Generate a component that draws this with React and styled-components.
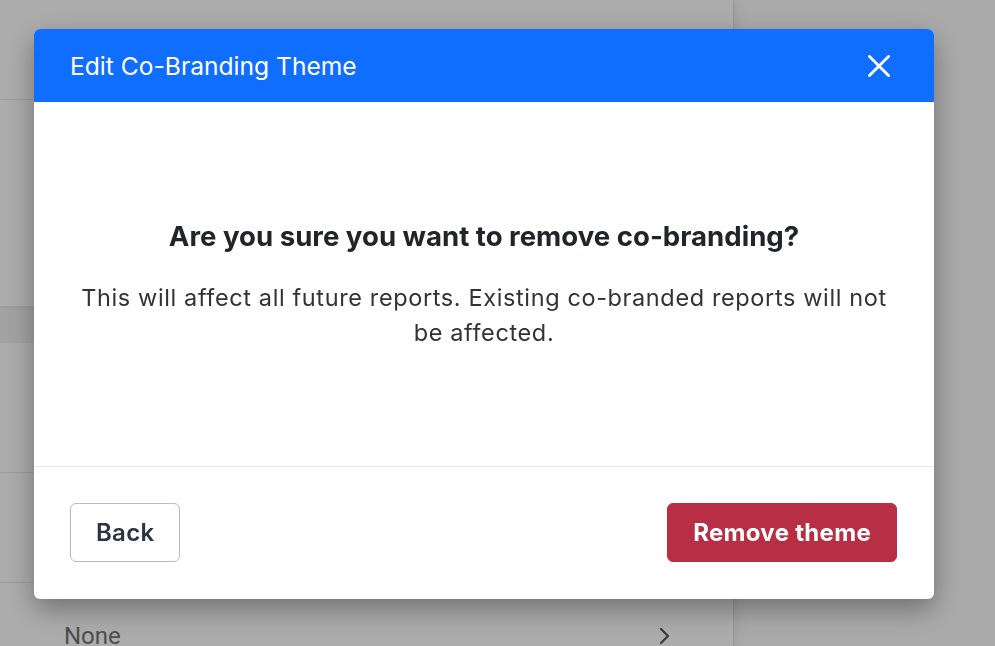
import styled, { createGlobalStyle } from "styled-components";

const GlobalStyle = createGlobalStyle`
  html, body {
    margin: 0;
    padding: 0;
    height: 100%;
    overflow: hidden;
  }
  body {
    font-family: Inter, "Noto Sans", sans-serif;
    background: #ffffff;
  }
`;

const Page = styled.div`
  display: flex;
  width: 100vw;
  height: 100vh;
  overflow: hidden;
  background: #fcfcfc;
`;

const Panel = styled.div`
  width: 733px;
  display: flex;
  flex-direction: column;
  background: #f1f1f1;
  border-right: 1px solid #e6e6e6;
  box-shadow: 4px 0 10px rgba(0, 0, 0, 0.06);
`;

const Card = styled.div`
  background: #ffffff;
  box-shadow: 0 2px 4px rgba(0, 0, 0, 0.05);
  margin-bottom: ${(p) => p.$gap || 0}px;
`;

const Row = styled.div`
  height: ${(p) => p.$h}px;
  border-bottom: 1px solid ${(p) => (p.$last ? "transparent" : "#e9e9e9")};
  display: flex;
  align-items: flex-start;
  justify-content: space-between;
  padding: 38px 61px 0 64px;
  box-sizing: border-box;
  overflow: hidden;
`;

const RowLabel = styled.span`
  font-family: Roboto, Inter, sans-serif;
  font-size: 24px;
  line-height: 30px;
  color: #6f7378;
`;

const Chevron = styled.svg`
  width: 14px;
  height: 20px;
  margin-top: 5px;
`;

const Overlay = styled.div`
  position: fixed;
  inset: 0;
  background: rgba(0, 0, 0, 0.325);
  display: flex;
  align-items: flex-start;
  justify-content: flex-start;
  padding: 29px 0 0 34px;
`;

const Modal = styled.div`
  width: 900px;
  background: #ffffff;
  border-radius: 6px;
  overflow: hidden;
  box-shadow: 0 10px 28px rgba(0, 0, 0, 0.35);
  display: flex;
  flex-direction: column;
`;

const Header = styled.div`
  height: 73px;
  background: #0f6efd;
  display: flex;
  align-items: center;
  justify-content: space-between;
  padding: 0 43px 0 36px;
  box-sizing: border-box;
`;

const Title = styled.h2`
  margin: 0;
  font-size: 24.6px;
  font-weight: 400;
  color: #ffffff;
`;

const CloseButton = styled.button`
  background: none;
  border: none;
  padding: 0;
  width: 24px;
  height: 24px;
  display: grid;
  place-items: center;
  cursor: pointer;
`;

const Body = styled.div`
  height: 365px;
  border-bottom: 1px solid #e6e6e6;
  display: flex;
  flex-direction: column;
  align-items: center;
  padding: 117px 44px 0;
  text-align: center;
  box-sizing: border-box;
`;

const Question = styled.h3`
  margin: 0 0 27px;
  font-size: 27.6px;
  line-height: 34px;
  font-weight: 700;
  color: #212529;
`;

const Message = styled.p`
  margin: 0;
  font-size: 23.5px;
  line-height: 35px;
  letter-spacing: 0.62px;
  color: #333333;
`;

const Footer = styled.div`
  display: flex;
  justify-content: space-between;
  align-items: center;
  padding: 36px 37px 37px 36px;
`;

const Button = styled.button`
  height: 59px;
  padding: 0 25px;
  border-radius: 6px;
  font-family: Inter, sans-serif;
  font-size: 24px;
  font-weight: ${(p) => (p.$danger ? 700 : 600)};
  letter-spacing: 0.3px;
  cursor: pointer;
  border: 1px solid ${(p) => (p.$danger ? "#b82e45" : "#b6bcc4")};
  background: ${(p) => (p.$danger ? "#b82e45" : "#ffffff")};
  color: ${(p) => (p.$danger ? "#ffffff" : "#2b3440")};
`;

export default function App() {
  return (
    <>
      <GlobalStyle />
      <Page>
        <Panel>
          <Card $gap={37}>
            <Row $h={100} />
            <Row $h={206} $last />
          </Card>
          <Card>
            <Row $h={130} />
            <Row $h={110} />
            <Row $h={63} $last>
              <RowLabel>None</RowLabel>
              <Chevron viewBox="0 0 14 20" fill="none">
                <path d="M3 3l7 7-7 7" stroke="#555" strokeWidth="2.2" strokeLinecap="round" strokeLinejoin="round" />
              </Chevron>
            </Row>
          </Card>
        </Panel>
      </Page>
      <Overlay>
        <Modal>
          <Header>
            <Title>Edit Co-Branding Theme</Title>
            <CloseButton aria-label="Close">
              <svg width="22" height="22" viewBox="0 0 22 22">
                <path d="M1.5 1.5l19 19M20.5 1.5l-19 19" stroke="#fff" strokeWidth="2.8" strokeLinecap="square" />
              </svg>
            </CloseButton>
          </Header>
          <Body>
            <Question>Are you sure you want to remove co-branding?</Question>
            <Message>
              This will affect all future reports. Existing co-branded reports will not be affected.
            </Message>
          </Body>
          <Footer>
            <Button>Back</Button>
            <Button $danger>Remove theme</Button>
          </Footer>
        </Modal>
      </Overlay>
    </>
  );
}
